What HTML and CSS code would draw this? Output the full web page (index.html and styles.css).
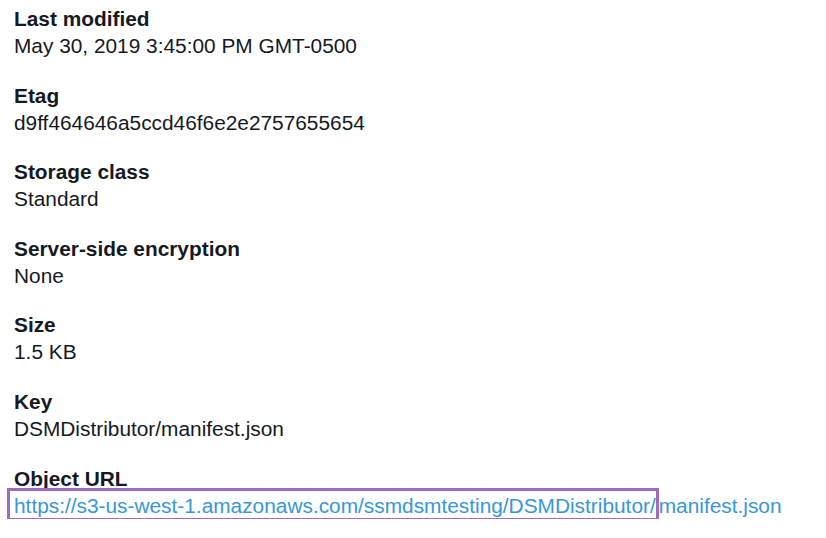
FILE: index.html
```html
<!DOCTYPE html>
<html>
<head>
<meta charset="utf-8">
<link rel="stylesheet" href="styles.css">
</head>
<body>
<dl class="props">
  <div class="prop">
    <dt>Last modified</dt>
    <dd>May 30, 2019 3:45:00 PM GMT-0500</dd>
  </div>
  <div class="prop">
    <dt>Etag</dt>
    <dd>d9ff464646a5ccd46f6e2e2757655654</dd>
  </div>
  <div class="prop">
    <dt>Storage class</dt>
    <dd>Standard</dd>
  </div>
  <div class="prop">
    <dt>Server-side encryption</dt>
    <dd>None</dd>
  </div>
  <div class="prop">
    <dt>Size</dt>
    <dd>1.5 KB</dd>
  </div>
  <div class="prop">
    <dt>Key</dt>
    <dd>DSMDistributor/manifest.json</dd>
  </div>
  <div class="prop">
    <dt>Object URL</dt>
    <dd><a class="link" href="#"><span class="hl">https://s3-us-west-1.amazonaws.com/ssmdsmtesting/DSMDistributor/</span>manifest.json</a></dd>
  </div>
</dl>
</body>
</html>
```
FILE: styles.css
```css
html, body {
  margin: 0;
  padding: 0;
  background: #ffffff;
}
body {
  font-family: "Liberation Sans", Arial, sans-serif;
  font-size: 20.85px;
  color: #16191f;
}
.props {
  margin: 0;
  padding: 5px 14px 0;
  display: flex;
  flex-direction: column;
  gap: 22.6px;
}
.prop dt {
  font-weight: bold;
  line-height: 27px;
}
.prop dd {
  margin: 0;
  line-height: 27px;
}
.link {
  color: #3a97d6;
  text-decoration: none;
}
.hl {
  border: 3px solid #9d6cbc;
  padding: 3px 0 1px 4px;
  margin-left: -7px;
}
```
